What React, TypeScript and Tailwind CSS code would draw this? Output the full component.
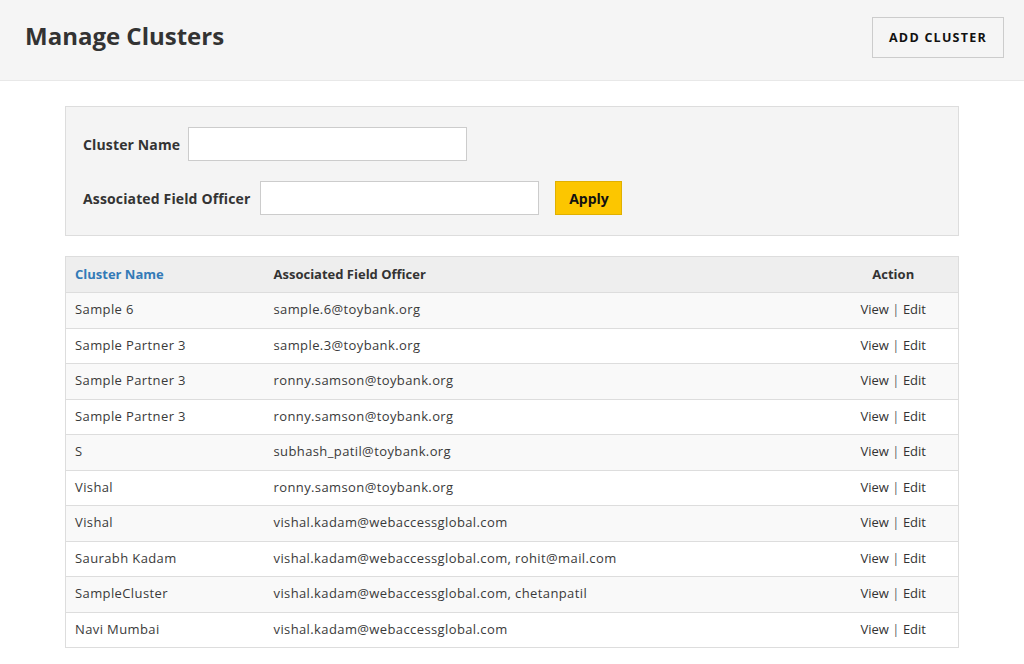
import React from 'react';

const rows = [
  { name: 'Sample 6', officer: 'sample.6@toybank.org' },
  { name: 'Sample Partner 3', officer: 'sample.3@toybank.org' },
  { name: 'Sample Partner 3', officer: 'ronny.samson@toybank.org' },
  { name: 'Sample Partner 3', officer: 'ronny.samson@toybank.org' },
  { name: 'S', officer: 'subhash_patil@toybank.org' },
  { name: 'Vishal', officer: 'ronny.samson@toybank.org' },
  { name: 'Vishal', officer: 'vishal.kadam@webaccessglobal.com' },
  { name: 'Saurabh Kadam', officer: 'vishal.kadam@webaccessglobal.com, rohit@mail.com' },
  { name: 'SampleCluster', officer: 'vishal.kadam@webaccessglobal.com, chetanpatil' },
  { name: 'Navi Mumbai', officer: 'vishal.kadam@webaccessglobal.com' },
];

export default function App(): React.ReactElement {
  return (
    <div className="min-h-screen bg-white text-[#333] font-['Open_Sans',sans-serif]">
      {/* Header */}
      <header className="flex h-[81px] items-center justify-between border-b border-[#e8e8e8] bg-[#f5f5f5] pl-[25px] pr-[20px]">
        <h1 className="text-[24px] font-bold text-[#333] -mt-[8px]">Manage Clusters</h1>
        <button
          type="button"
          className="-mt-[5px] h-[41px] w-[132px] border border-[#ccc] bg-[#f5f5f5] pt-[2px] text-[12.5px] font-bold tracking-[0.1em] text-[#111]"
        >
          ADD CLUSTER
        </button>
      </header>

      <main className="mx-[65px] mt-[25px] w-[894px]">
        {/* Filters */}
        <div className="flex flex-col gap-[20px] border border-[#ddd] bg-[#f4f4f4] px-[17px] pt-[20px] pb-[20px]">
          <div className="flex items-center gap-[8px]">
            <label className="text-[14px] font-bold tracking-[0.01em] text-[#333]">Cluster Name</label>
            <input type="text" className="h-[34px] w-[279px] border border-[#ccc] bg-white" />
          </div>
          <div className="flex items-center gap-[10px]">
            <label className="text-[14px] font-bold tracking-[0.01em] text-[#333]">Associated Field Officer</label>
            <input type="text" className="h-[34px] w-[279px] border border-[#ccc] bg-white" />
            <button
              type="button"
              className="ml-[6px] h-[34px] w-[67px] border border-[#e0b000] bg-[#fcc600] text-[14px] font-bold text-[#111]"
            >
              Apply
            </button>
          </div>
        </div>

        {/* Table */}
        <table className="mt-[20px] w-full border-collapse border border-[#ddd] text-[13px]">
          <thead>
            <tr className="h-[36px] bg-[#eee]">
              <th className="w-[199px] border-b border-[#ddd] px-[9px] text-left font-bold text-[#337ab7]">
                Cluster Name
              </th>
              <th className="border-b border-[#ddd] px-[9px] text-left font-bold text-[#333]">
                Associated Field Officer
              </th>
              <th className="w-[130px] border-b border-[#ddd] px-[9px] text-center font-bold text-[#333]">
                Action
              </th>
            </tr>
          </thead>
          <tbody>
            {rows.map((r, i) => (
              <tr key={i} className={`h-[35.5px] ${i % 2 === 0 ? 'bg-[#f9f9f9]' : 'bg-white'}`}>
                <td className="border-t border-[#ddd] px-[9px] pb-[1px] tracking-[0.03em] text-[#3a3a3a]">{r.name}</td>
                <td className="border-t border-[#ddd] px-[9px] pb-[1px] tracking-[0.03em] text-[#3a3a3a]">{r.officer}</td>
                <td className="border-t border-[#ddd] px-[9px] pb-[1px] text-center text-[#333]">
                  <span>View</span> <span className="text-[#666]">|</span> <span>Edit</span>
                </td>
              </tr>
            ))}
          </tbody>
        </table>
      </main>
    </div>
  );
}
